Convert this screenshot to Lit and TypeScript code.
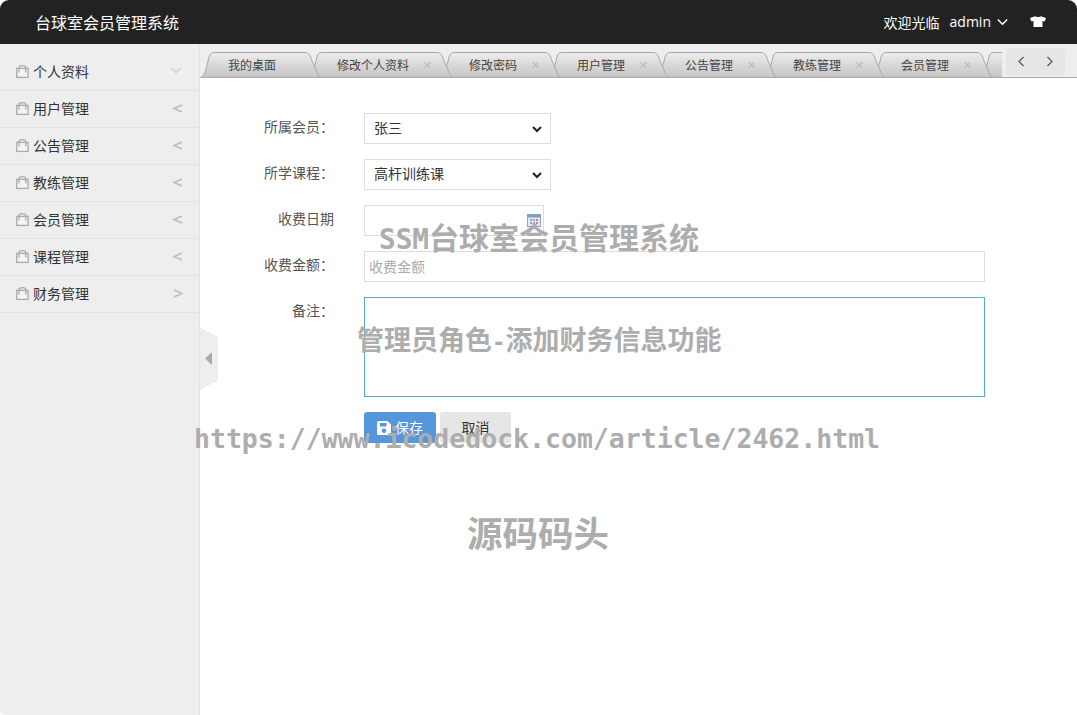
import { LitElement, html, css, svg } from "lit";
import { customElement } from "lit/decorators.js";

const MENU = ["个人资料", "用户管理", "公告管理", "教练管理", "会员管理", "课程管理", "财务管理"];
const TABS = [
  { label: "我的桌面", w: 120, pad: 27, close: false },
  { label: "修改个人资料", w: 144, pad: 28, close: true },
  { label: "修改密码", w: 120, pad: 28, close: true },
  { label: "用户管理", w: 120, pad: 28, close: true },
  { label: "公告管理", w: 120, pad: 28, close: true },
  { label: "教练管理", w: 120, pad: 28, close: true },
  { label: "会员管理", w: 120, pad: 28, close: true },
  { label: "课程管理", w: 120, pad: 28, close: true },
];

const tabPath = (w: number) =>
  `M0 25.5 C2.5 24 4 21 5 17 L8 5 C8.7 2 10.5 .5 13 .5 L${w - 17} .5 C${w - 13} .5 ${w - 12} 1.5 ${w - 10.5} 5 L${w - 5} 18 C${w - 3.5} 22 ${w - 2} 24.5 ${w} 25.5`;

@customElement("app-root")
export class AppRoot extends LitElement {
  static styles = css`
    :host {
      display: block;
      height: 715px;
      width: 1077px;
      overflow: hidden;
      position: relative;
      background: #fff;
      font-family: "Noto Sans CJK SC", "Open Sans", sans-serif;
      font-size: 14px;
      color: #333;
    }
    .top {
      height: 44px;
      background: #222;
      border-radius: 9px 9px 0 0;
      color: #fff;
      display: flex;
      align-items: center;
      padding: 0 31px 1px 35px;
      box-sizing: border-box;
    }
    .brand { font-size: 16px; flex: 1; }
    .welcome { font-size: 14px; }
    .user { font-family: "Open Sans", sans-serif; font-size: 14px; margin-left: 10px; }
    .caret { margin-left: 6px; }
    .shirt { margin-left: 22px; }
    .body { display: flex; height: 671px; }
    .side {
      width: 200px;
      flex: none;
      box-sizing: border-box;
      background: #eee;
      border-right: 1px solid #e2e2e2;
      border-bottom-left-radius: 6px;
      padding-top: 10px;
    }
    .item {
      height: 37px;
      box-sizing: border-box;
      border-bottom: 1px solid #e3e3e3;
      display: flex;
      align-items: center;
      padding: 0 16px 2px 16px;
      color: #333;
    }
    .item .bag { margin-top: 2px; }
    .item span { margin-left: 3px; flex: 1; line-height: 34px; }
    .main { flex: 1; min-width: 0; position: relative; }
    .strip {
      height: 34px;
      background: #eee;
      border-bottom: 1px solid #aaa;
      display: flex;
      box-sizing: border-box;
    }
    .tabs { width: 802px; height: 33px; overflow: hidden; display: flex; padding: 8px 0 0 1px; box-sizing: border-box; flex: none; }
    .tab {
      position: relative;
      flex: none;
      height: 25px;
      margin-right: -12px;
      display: flex;
      align-items: center;
      font-size: 12px;
      color: #444;
      box-sizing: border-box;
    }
    .tab svg.bg { position: absolute; left: 0; top: 0; }
    .tab b { position: relative; font-weight: normal; line-height: 25px; }
    .tab i { position: relative; font-style: normal; margin-left: 14px; color: #bbb; font-size: 15px; font-family: "Liberation Sans", sans-serif; width: 9px; }
    .nav {
      margin: 4px 0 0 4px;
      width: 59px;
      height: 27px;
      background: #e6e6e6;
      border-radius: 3px;
      display: flex;
      align-items: center;
      justify-content: space-around;
      padding: 0 1px;
      box-sizing: border-box;
    }
    .form { padding: 35px 0 0 0; }
    .row { display: flex; margin-bottom: 15px; align-items: flex-start; }
    .row label {
      width: 134px;
      text-align: right;
      margin-right: 30px;
      font-size: 14px;
      line-height: 26px;
      color: #555;
      flex: none;
    }
    select, input, textarea {
      box-sizing: border-box;
      border: 1px solid #ddd;
      background: #fff;
      font-family: "Noto Sans CJK SC", sans-serif;
      font-size: 14px;
      color: #333;
      outline: none;
      border-radius: 0;
      margin: 0;
    }
    select {
      width: 187px;
      height: 31px;
      padding: 0 9px 4px;
      appearance: none;
      background-image: url("data:image/svg+xml,%3Csvg xmlns='http://www.w3.org/2000/svg' width='10' height='7'%3E%3Cpath d='M1 1l4 4 4-4' fill='none' stroke='%23222' stroke-width='2'/%3E%3C/svg%3E");
      background-repeat: no-repeat;
      background-position: 167px 12px;
    }
    .date { width: 180px; height: 31px; display: block; }
    .datewrap { position: relative; }
    .cal { position: absolute; left: 163px; top: 9px; }
    .money { width: 621px; height: 31px; padding: 0 4px 1px; }
    .money::placeholder { color: #aaa; }
    textarea { width: 621px; height: 100px; border-color: #55aebf; resize: none; display: block; }
    .btns { display: flex; margin-left: 164px; gap: 4px; }
    .btn {
      height: 31px;
      border: none;
      border-radius: 3px;
      font-family: "Noto Sans CJK SC", sans-serif;
      font-size: 14px;
      display: flex;
      align-items: center;
      justify-content: center;
      box-sizing: border-box;
      padding: 0 0 2px;
    }
    .save { width: 72px; background: #5596dd; color: #fff; gap: 4px; }
    .save svg { margin-top: 2px; }
    .cancel { width: 71px; background: #e6e6e6; color: #333; }
    .handle { position: absolute; left: -1px; top: 284px; }
    .wm {
      position: absolute;
      white-space: nowrap;
      font-weight: bold;
      color: #adadad;
      font-family: "DejaVu Sans Mono", "Noto Sans CJK SC", monospace;
      pointer-events: none;
      line-height: 1;
    }
    .wm .ssm { font-size: 27.7px; }
    .wm .dash { font-size: 22.4px; }
    .w1 { left: 379px; top: 224px; font-size: 30px; }
    .w2 { left: 357px; top: 327px; font-size: 27px; }
    .w3 { left: 194px; top: 426px; font-size: 26.5px; }
    .w4 { left: 467px; top: 517px; font-size: 35.5px; }
  `;

  private bag() {
    return html`<svg class="bag" width="14" height="14" viewBox="0 0 14 14" fill="none" stroke="#aaa" stroke-width="1.3">
      <rect x=".7" y="3.4" width="11.4" height="9" fill="#f4f4f4"></rect>
      <path d="M3 7.5V2.6C3 1.3 4.4.7 6.4.7s3.4.6 3.4 1.9V7.5"></path>
    </svg>`;
  }

  private arrow(i: number) {
    const d = i === 0 ? "M1 1l5 4.5 5-4.5" : i === 6 ? "M4 1l8 3.5-8 3.5" : "M12 1L4 4.5 12 8";
    return html`<svg width="13" height="9" viewBox="0 0 13 9" fill="none" stroke=${i === 0 ? "#ccc" : "#bbb"} stroke-width="1.4"><path d=${d}></path></svg>`;
  }

  render() {
    return html`
      <div class="top">
        <div class="brand">台球室会员管理系统</div>
        <div class="welcome">欢迎光临</div>
        <div class="user">admin</div>
        <svg class="caret" width="11" height="8" viewBox="0 0 11 8" fill="none" stroke="#fff" stroke-width="1.5"><path d="M.8 1.5l4.7 4.7 4.7-4.7"></path></svg>
        <svg class="shirt" width="16" height="11" viewBox="0 0 16 13" preserveAspectRatio="none" fill="#fff"><path d="M5 .3C6 1.6 10 1.6 11 .3l5 2.2-1.3 4-2.2-.6V13h-9V5.9l-2.2.6L0 2.5z"></path></svg>
      </div>
      <div class="body">
        <div class="side">
          ${MENU.map((m, i) => html`<div class="item">${this.bag()}<span>${m}</span>${this.arrow(i)}</div>`)}
        </div>
        <div class="main">
          <div class="strip">
            <div class="tabs">
              ${TABS.map(
                (t, i) => html`<div class="tab" style="width:${t.w}px;padding-left:${t.pad}px;z-index:${20 - i}">
                  <svg class="bg" width=${t.w} height="25" viewBox="0 0 ${t.w} 25">
                    <defs><linearGradient id="g" x1="0" y1="0" x2="0" y2="1"><stop offset="0" stop-color="#ededed"></stop><stop offset="1" stop-color="#c4c4c4"></stop></linearGradient></defs>
                    ${svg`<path d=${tabPath(t.w)} fill="url(#g)" stroke="#a8a8a8"></path>`}
                  </svg>
                  <b>${t.label}</b>${t.close ? html`<i>×</i>` : ""}
                </div>`
              )}
            </div>
            <div class="nav">
              <svg width="8" height="11" viewBox="0 0 8 11" fill="none" stroke="#555" stroke-width="1.2"><path d="M6.5 1L2 5.5 6.5 10"></path></svg>
              <svg width="8" height="11" viewBox="0 0 8 11" fill="none" stroke="#555" stroke-width="1.2"><path d="M1.5 1L6 5.5 1.5 10"></path></svg>
            </div>
          </div>
          <div class="form">
            <div class="row"><label>所属会员：</label><select><option>张三</option></select></div>
            <div class="row"><label>所学课程：</label><select><option>高杆训练课</option></select></div>
            <div class="row"><label>收费日期</label>
              <div class="datewrap"><input class="date" />
                <svg class="cal" width="14" height="13" viewBox="0 0 14 13">
                  <rect x=".5" y=".5" width="13" height="12" fill="#dfe8f5" stroke="#8fa6c8"></rect>
                  <rect x=".5" y=".5" width="13" height="3" fill="#7f9cc8"></rect>
                  <path d="M3 5h2v2H3zM6 5h2v2H6zM3 8h2v2H3zM6 8h2v2H6z" fill="#8fa6c8"></path>
                  <path d="M9 5h2v2H9zM9 8h2v2H9z" fill="#e08080"></path>
                </svg>
              </div>
            </div>
            <div class="row"><label>收费金额：</label><input class="money" placeholder="收费金额" /></div>
            <div class="row"><label>备注：</label><textarea></textarea></div>
            <div class="btns">
              <button class="btn save">
                <svg width="14" height="14" viewBox="0 0 14 14" fill="#fff"><path fill-rule="evenodd" d="M1.5 0H10.5L14 3.5V12.5A1.5 1.5 0 0 1 12.5 14H1.5A1.5 1.5 0 0 1 0 12.5V1.5A1.5 1.5 0 0 1 1.5 0ZM3 2V5.5H9.5V2ZM7 7.5A2.3 2.3 0 1 0 7 12.1 2.3 2.3 0 1 0 7 7.5Z"></path></svg>
                保存
              </button>
              <button class="btn cancel">取消</button>
            </div>
          </div>
          <svg class="handle" width="19" height="63" viewBox="0 0 19 63">
            <path d="M1 .5L18 9V52L1 61z" fill="#eee" stroke="#e6e6e6"></path>
            <path d="M6 30.5L13 24V37z" fill="#aaa"></path>
          </svg>
        </div>
      </div>
      <div class="wm w1"><span class="ssm">SSM</span>台球室会员管理系统</div>
      <div class="wm w2">管理员角色<span class="dash">-</span>添加财务信息功能</div>
      <div class="wm w3">https://www.icodedock.com/article/2462.html</div>
      <div class="wm w4">源码码头</div>
    `;
  }
}
